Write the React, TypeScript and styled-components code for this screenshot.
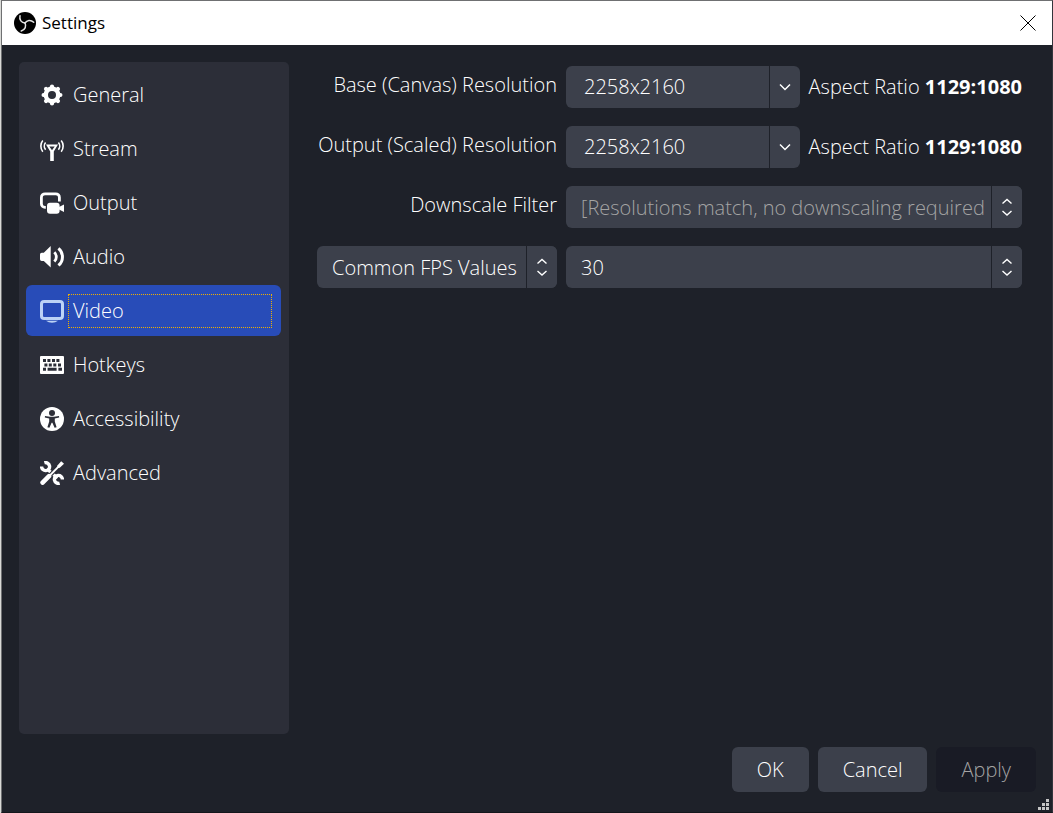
import React from "react";
import styled, { createGlobalStyle, css } from "styled-components";

const color = {
  window: "#1e2129",
  panel: "#2c2e38",
  field: "#3c404b",
  accent: "#284cb8",
  text: "#ffffff",
  muted: "#a4a4a4",
  disabled: "#191b25",
};

const GlobalStyle = createGlobalStyle`
  *, *::before, *::after { box-sizing: border-box; }
  body {
    margin: 0;
    background: #d9dad7;
    font-family: "Open Sans", "Noto Sans", sans-serif;
    font-size: 20px;
    font-weight: 300;
    line-height: 28px;
    color: ${color.text};
  }
  button, input, select { font: inherit; color: inherit; border: 0; margin: 0; }
`;

const Window = styled.div`
  position: relative;
  display: flex;
  flex-direction: column;
  min-height: 100vh;
  margin-left: 1px;
  background: ${color.window};
  border: 1px solid #6f7072;
  border-right-color: #33353c;
  border-bottom-color: #14161c;
`;

const TitleBar = styled.header`
  display: flex;
  align-items: center;
  gap: 6px;
  height: 44px;
  padding: 0 16px 0 12px;
  background: #ffffff;
  color: #000000;
`;

const Title = styled.h1`
  flex: 1;
  margin: 0;
  font-size: 17px;
  line-height: 24px;
  font-weight: 400;
`;

const CloseButton = styled.button`
  display: flex;
  padding: 0;
  background: none;
`;

const Body = styled.div`
  flex: 1;
  display: flex;
  gap: 28px;
  padding: 17px 30px 0 17px;
`;

const Sidebar = styled.nav`
  flex: 0 0 270px;
  display: flex;
  flex-direction: column;
  gap: 3px;
  padding: 7px 8px 7px 7px;
  border-radius: 5px;
  background: ${color.panel};
`;

const NavItem = styled.button<{ $active?: boolean }>`
  display: flex;
  align-items: center;
  gap: 4px;
  height: 51px;
  padding: 0 9px 0 14px;
  border-radius: 6px;
  background: ${(p) => (p.$active ? color.accent : "transparent")};
  text-align: left;
  svg { flex: none; color: ${(p) => (p.$active ? "#bcd3f5" : color.text)}; }
`;

const NavLabel = styled.span<{ $focused?: boolean }>`
  flex: 1;
  padding: 2px 4px;
  border: 1px dotted ${(p) => (p.$focused ? "#f0b000" : "transparent")};
`;

const Form = styled.form`
  flex: 1;
  min-width: 0;
  display: grid;
  grid-template-columns: 240px minmax(0, 1fr);
  grid-auto-rows: 42px;
  align-content: start;
  gap: 18px 9px;
  padding-top: 4px;
`;

const Label = styled.label`
  display: flex;
  justify-content: flex-end;
  padding-top: 5px;
  white-space: nowrap;
`;

const Cell = styled.div`
  display: flex;
  align-items: center;
  gap: 9px;
  white-space: nowrap;
`;

const Ratio = styled.b`
  font-weight: 700;
`;

const Combo = styled.div`
  flex: 1;
  min-width: 0;
  display: flex;
  gap: 1px;
  height: 42px;
`;

const endPart = css`
  display: flex;
  align-items: center;
  justify-content: center;
  width: 30px;
  border-radius: 0 6px 6px 0;
  background: ${color.field};
`;

const ComboInput = styled.input`
  flex: 1;
  min-width: 0;
  padding: 0 18px;
  border-radius: 6px 0 0 6px;
  background: ${color.field};
`;

const ComboButton = styled.button`
  ${endPart}
  padding: 0;
`;

const SelectBox = styled.div`
  display: grid;
  grid-template-columns: minmax(0, 1fr) 31px;
  height: 42px;
`;

const Select = styled.select`
  grid-area: 1 / 1 / 2 / 3;
  appearance: none;
  padding: 2px 38px 0 15px;
  border-radius: 6px;
  background: ${color.field};
  &:disabled { color: ${color.muted}; opacity: 1; }
`;

const SelectArrows = styled.span`
  ${endPart}
  grid-area: 1 / 2 / 2 / 3;
  width: 31px;
  border-left: 1px solid ${color.window};
  pointer-events: none;
`;

const Footer = styled.footer`
  display: flex;
  justify-content: flex-end;
  gap: 9px;
  padding: 13px 16px 20px;
`;

const Button = styled.button`
  height: 45px;
  padding: 0 25px;
  border-radius: 6px;
  background: ${color.field};
  &:disabled { background: ${color.disabled}; color: ${color.muted}; }
`;

const Grip = styled.svg`
  position: absolute;
  right: 2px;
  bottom: 1px;
`;

const Icon = ({ children }: { children: React.ReactNode }) => (
  <svg width="24" height="24" viewBox="0 0 24 24" fill="none" stroke="currentColor" aria-hidden="true">
    {children}
  </svg>
);

const ObsLogo = () => (
  <svg width="22" height="22" viewBox="0 0 22 22" fill="none" aria-hidden="true">
    <circle cx="11" cy="11" r="11" fill="#000000" />
    {[0, 120, 240].map((a) => (
      <path
        key={a}
        d="M11 11C7.6 10.8 5 8 6 3.8"
        stroke="#e4e4e4"
        strokeWidth="1.5"
        strokeLinecap="round"
        transform={`rotate(${a} 11 11)`}
      />
    ))}
  </svg>
);

const GearIcon = () => (
  <Icon>
    <circle cx="12" cy="12" r="6.2" strokeWidth="4.4" />
    {[0, 45, 90, 135, 180, 225, 270, 315].map((a) => (
      <path key={a} d="M12 5V3.6" strokeWidth="4.2" strokeLinecap="round" transform={`rotate(${a} 12 12)`} />
    ))}
  </Icon>
);

const StreamIcon = () => (
  <Icon>
    <path d="M6 7.5H18L13.8 14.5V24H10.2V14.5Z M9.3 9.6L12 13.2L14.7 9.6Z" fill="currentColor" fillRule="evenodd" stroke="none" />
    <path d="M2.8 3.4C.2 6.4.2 11.8 2.8 14.8M21.2 3.4C23.8 6.4 23.8 11.8 21.2 14.8" strokeWidth="1.6" />
    <path d="M5.6 5.6C3.9 7.6 3.9 10.8 5.6 12.8M18.4 5.6C20.1 7.6 20.1 10.8 18.4 12.8" strokeWidth="1.6" />
  </Icon>
);

const OutputIcon = () => (
  <Icon>
    <path d="M5.8 16.4H5A3.6 3.6 0 0 1 1.4 12.8V6.4A3.6 3.6 0 0 1 5 2.8H15.8A3.6 3.6 0 0 1 19.4 6.4V10.6" strokeWidth="2.8" />
    <rect x="7" y="11.8" width="12.6" height="11" rx="3" fill="currentColor" stroke="none" />
    <path d="M19 16L24 13.6V21L19 18.6Z" fill="currentColor" stroke="none" />
  </Icon>
);

const AudioIcon = () => (
  <Icon>
    <path d="M0 9.5Q0 7.8 1.7 7.8H3.8L10.7 1V22.6L3.8 16H1.7Q0 16 0 14.3Z" fill="currentColor" stroke="none" />
    <path d="M14.3 7.2C17 9.8 17 14 14.3 16.6" strokeWidth="2.8" />
    <path d="M18.4 3.4C23.8 7.6 23.8 16.2 18.4 20.4" strokeWidth="3" />
  </Icon>
);

const VideoIcon = () => (
  <Icon>
    <rect x="1.5" y="2.5" width="21" height="17" rx="2.6" strokeWidth="3" />
    <path d="M6 21.8H18Q15.4 23.8 12 23.8T6 21.8Z" fill="currentColor" stroke="none" />
  </Icon>
);

const KeyboardIcon = () => (
  <Icon>
    <rect y="3" width="24" height="18" rx="1" fill="currentColor" stroke="none" />
    <path
      d="M3 6h3v3H3zM7.4 6h3v3h-3zM12 6h3v3h-3zM16.4 6h3v3h-3zM4.4 10.4h3v3h-3zM8.8 10.4h3v3h-3zM13.3 10.4h3v3h-3zM18 10.4h3v3h-3zM3 14.8h3v3H3zM7.6 14.8h9v3h-9zM18.4 14.8h3.6v3h-3.6z"
      fill={color.panel}
      stroke="none"
    />
  </Icon>
);

const AccessibilityIcon = () => (
  <Icon>
    <circle cx="12" cy="12" r="12" fill="currentColor" stroke="none" />
    <circle cx="12" cy="6" r="3" fill={color.panel} stroke="none" />
    <path
      d="M5 9L10 9.8H14L19 9L19.2 10.4L14.8 11.6V14.4L16.6 20.2L14.6 20.8L12.4 15.8H11.6L9.4 20.8L7.4 20.2L9.2 14.4V11.6L4.8 10.4Z"
      fill={color.panel}
      stroke="none"
    />
  </Icon>
);

const ToolsIcon = () => (
  <Icon>
    <path d="M7 8L17.5 17" strokeWidth="3.2" />
    <path d="M4.4 1.8A4 4 0 1 1 1.6 5.6" strokeWidth="3.4" />
    <path d="M19.6 22.2A4 4 0 1 1 22.4 18.4" strokeWidth="3.4" />
    <path d="M21 3L3 21.6" stroke={color.panel} strokeWidth="4" />
    <path d="M20.5 3.6L8 16.4" strokeWidth="2" />
    <path d="M17.4 4.4L21.2.2L24 2.8L19.8 6.8L17.4 7Z" fill="currentColor" stroke="none" />
    <path d="M9 15.2L2.6 21.6" strokeWidth="4.6" strokeLinecap="round" />
  </Icon>
);

const ChevronDown = () => (
  <svg width="12" height="12" viewBox="0 0 12 12" fill="none" stroke="currentColor" strokeWidth="1.5" aria-hidden="true">
    <path d="M1 3.5L6 8.5L11 3.5" />
  </svg>
);

const UpDown = () => (
  <svg width="12" height="20" viewBox="0 0 12 20" fill="none" stroke="currentColor" strokeWidth="1.4" aria-hidden="true">
    <path d="M1.5 6.5L6 2.5L10.5 6.5M1.5 14L6 18L10.5 14" />
  </svg>
);

const sections = [
  { name: "General", icon: GearIcon },
  { name: "Stream", icon: StreamIcon },
  { name: "Output", icon: OutputIcon },
  { name: "Audio", icon: AudioIcon },
  { name: "Video", icon: VideoIcon },
  { name: "Hotkeys", icon: KeyboardIcon },
  { name: "Accessibility", icon: AccessibilityIcon },
  { name: "Advanced", icon: ToolsIcon },
];

const ResolutionRow = ({ id, label }: { id: string; label: string }) => (
  <>
    <Label htmlFor={id}>{label}</Label>
    <Cell>
      <Combo>
        <ComboInput id={id} defaultValue="2258x2160" />
        <ComboButton type="button" aria-label={`${label} options`}>
          <ChevronDown />
        </ComboButton>
      </Combo>
      <span>
        Aspect Ratio <Ratio>1129:1080</Ratio>
      </span>
    </Cell>
  </>
);

type DropDownProps = React.ComponentProps<"select"> & { option: string };

const DropDown = ({ option, id, disabled, ...rest }: DropDownProps) => (
  <SelectBox>
    <Select id={id} disabled={disabled} aria-label={rest["aria-label"]}>
      <option>{option}</option>
    </Select>
    <SelectArrows>
      <UpDown />
    </SelectArrows>
  </SelectBox>
);

export default function App() {
  const active = "Video";
  return (
    <>
      <GlobalStyle />
      <Window>
        <TitleBar>
          <ObsLogo />
          <Title>Settings</Title>
          <CloseButton type="button" aria-label="Close">
            <svg width="16" height="16" viewBox="0 0 16 16" stroke="currentColor" strokeWidth="1" aria-hidden="true">
              <path d="M.5.5L15.5 15.5M15.5.5L.5 15.5" />
            </svg>
          </CloseButton>
        </TitleBar>
        <Body>
          <Sidebar aria-label="Settings sections">
            {sections.map(({ name, icon: SectionIcon }) => (
              <NavItem key={name} type="button" $active={name === active}>
                <SectionIcon />
                <NavLabel $focused={name === active}>{name}</NavLabel>
              </NavItem>
            ))}
          </Sidebar>
          <Form>
            <ResolutionRow id="base" label="Base (Canvas) Resolution" />
            <ResolutionRow id="output" label="Output (Scaled) Resolution" />
            <Label htmlFor="filter">Downscale Filter</Label>
            <DropDown id="filter" disabled option="[Resolutions match, no downscaling required]" />
            <DropDown aria-label="FPS type" option="Common FPS Values" />
            <DropDown aria-label="Common FPS value" option="30" />
          </Form>
        </Body>
        <Footer>
          <Button type="button">OK</Button>
          <Button type="button">Cancel</Button>
          <Button type="button" disabled>
            Apply
          </Button>
        </Footer>
        <Grip width="12" height="12" viewBox="0 0 12 12" fill="#c4c4c4" aria-hidden="true">
          <path d="M8 0h3v3H8zM4 4h3v3H4zM8 4h3v3H8zM0 8h3v3H0zM4 8h3v3H4zM8 8h3v3H8z" />
        </Grip>
      </Window>
    </>
  );
}
